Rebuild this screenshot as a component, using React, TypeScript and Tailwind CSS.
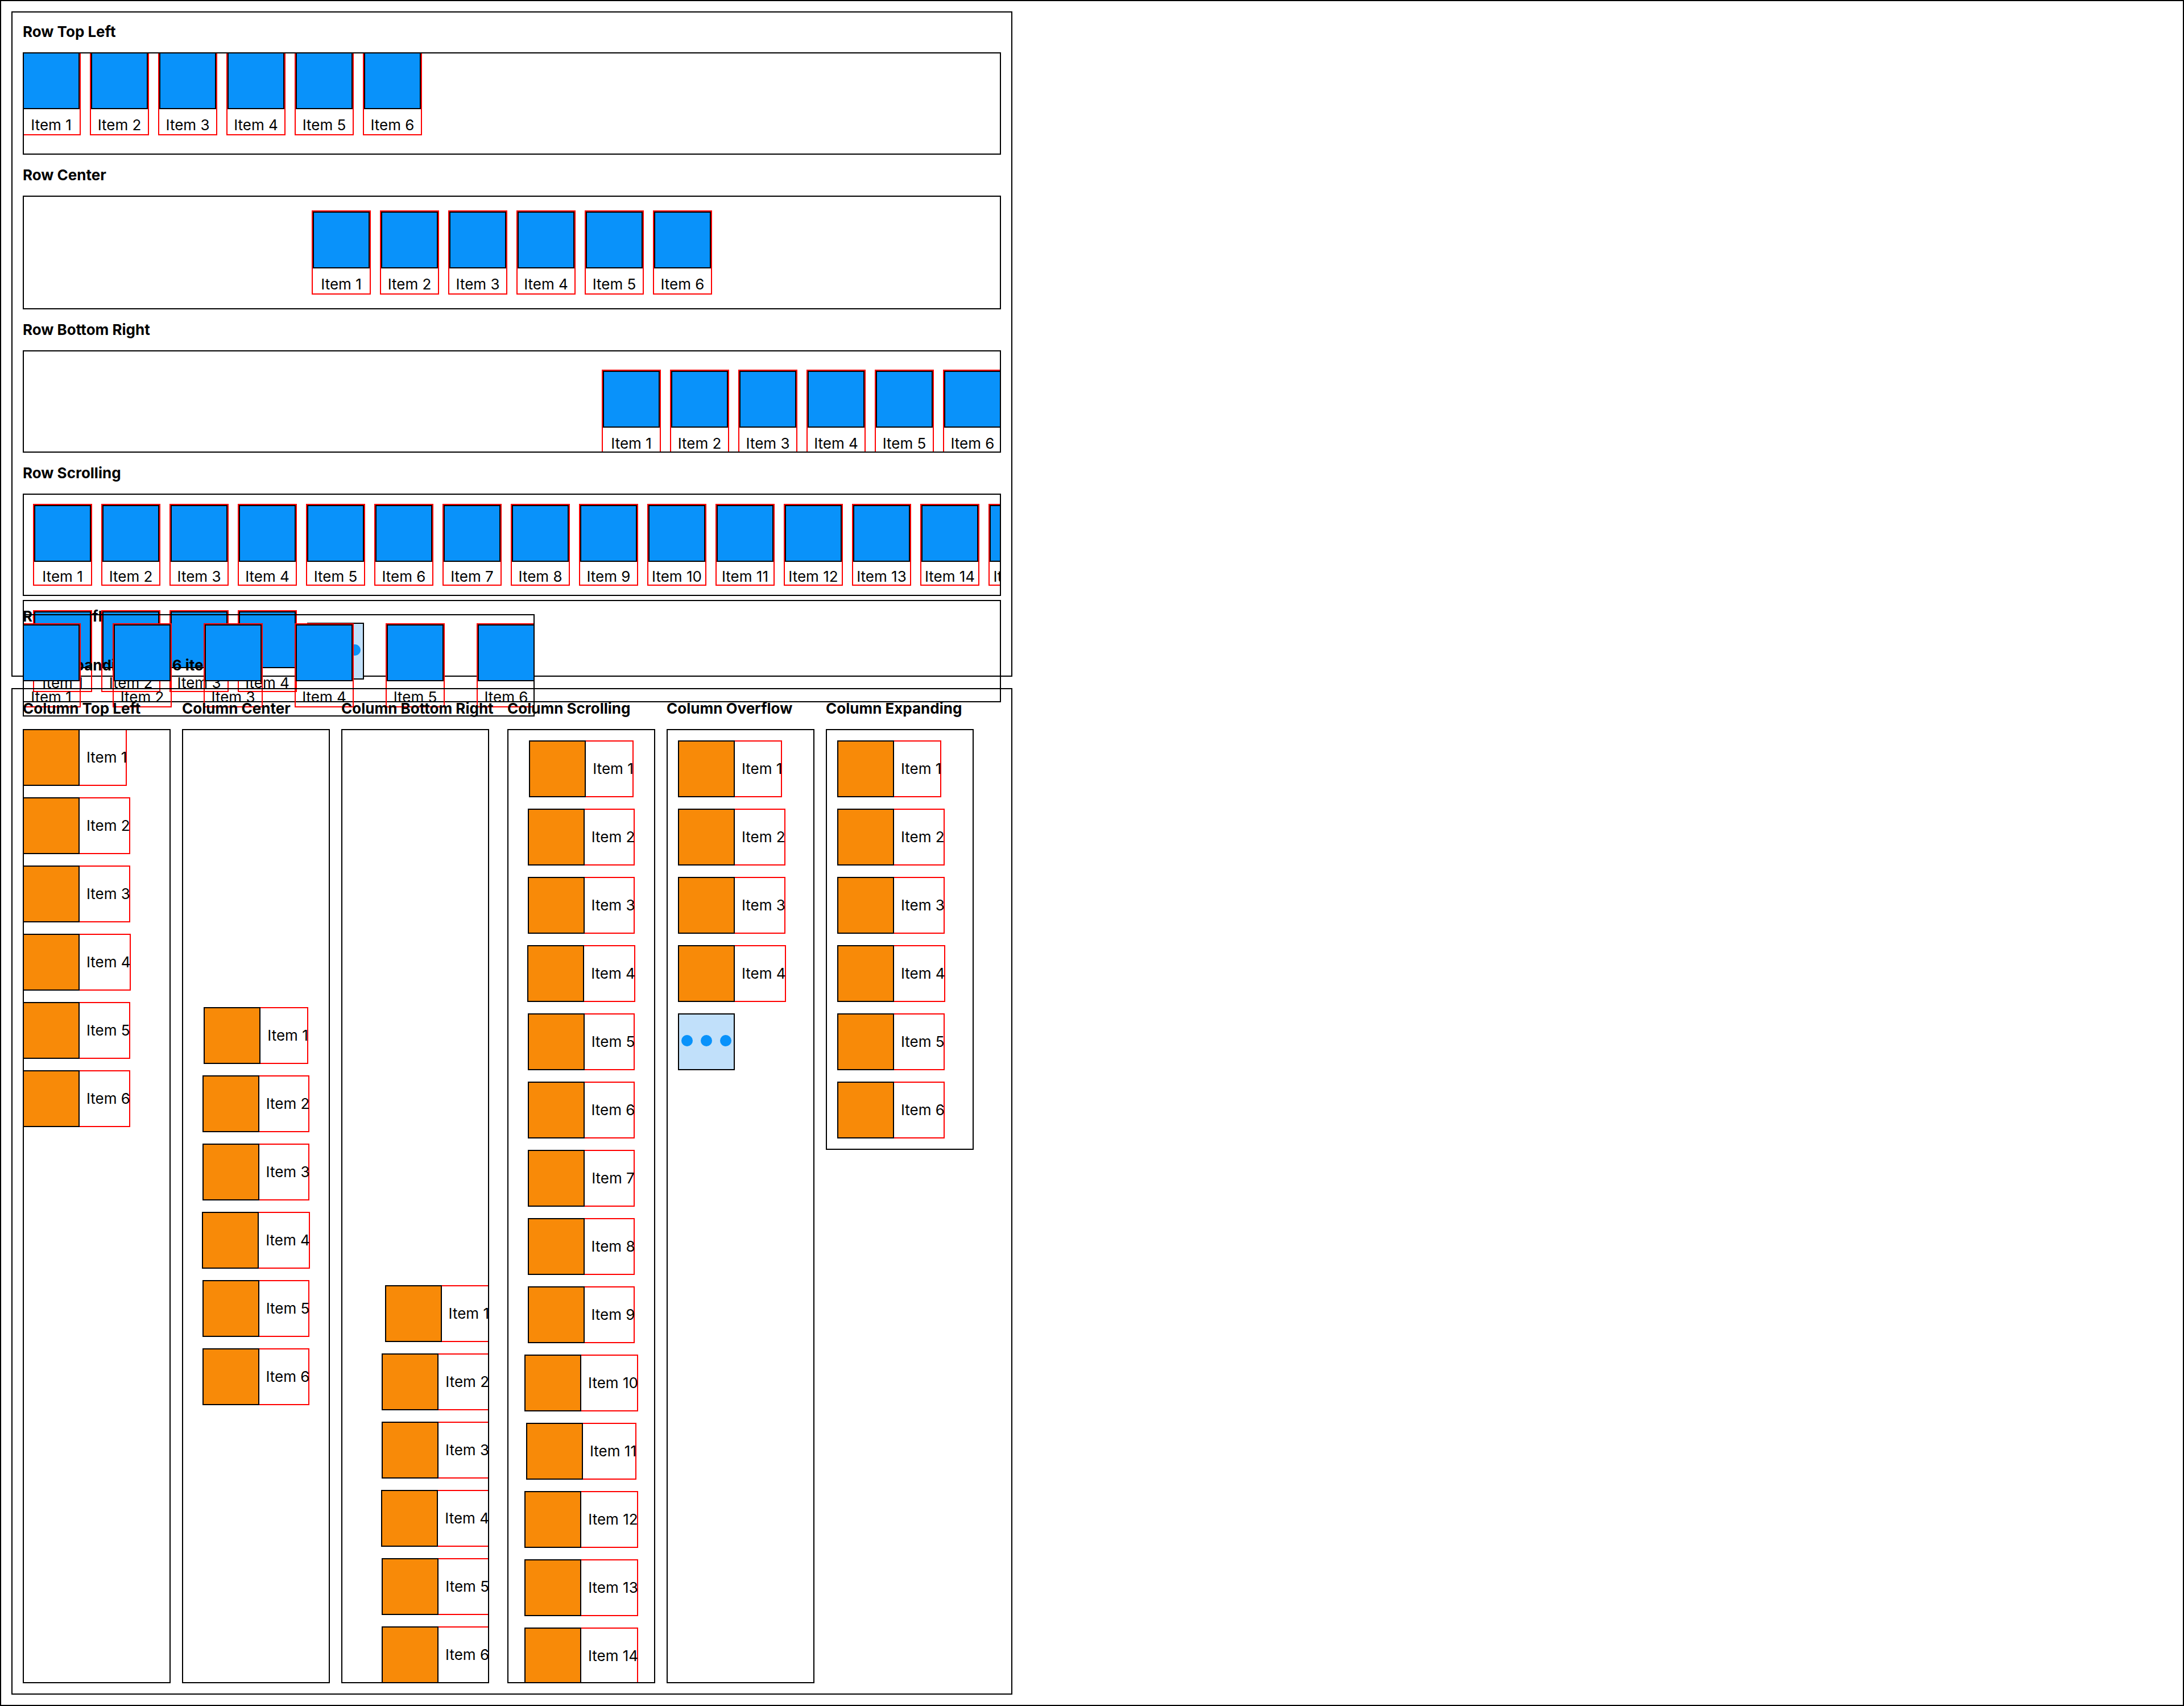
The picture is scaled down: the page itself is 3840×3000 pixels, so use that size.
import type { ReactNode } from "react";

const labels = (count: number) =>
  Array.from({ length: count }, (_, i) => `Item ${i + 1}`);

/* The frame is painted over the content so that clipped items stop at it. */
const FRAME =
  "relative overflow-clip after:pointer-events-none after:absolute after:inset-0 after:border-2 after:border-black after:content-['']";

function Title({ children }: { children: ReactNode }) {
  return (
    <h2 className="relative h-8 text-[26px] leading-8 font-bold whitespace-nowrap">
      {children}
    </h2>
  );
}

function RowItem({ label, compact = false }: { label: string; compact?: boolean }) {
  return (
    <li
      className={`flex w-[100px] shrink-0 flex-col items-center shadow-[0_0_0_2px_#ff0000] ${
        compact ? "h-[140px] gap-[10px]" : "h-36 gap-3"
      }`}
    >
      <div className="size-[100px] shrink-0 border-2 border-black bg-[#0992fa]" />
      <span className="shrink-0 leading-8 whitespace-nowrap">{label}</span>
    </li>
  );
}

function ColumnItem({ label }: { label: string }) {
  return (
    <li className="flex h-[100px] shrink-0 items-center gap-3 shadow-[inset_0_0_0_2px_#ff0000]">
      <div className="size-[100px] shrink-0 border-2 border-black bg-[#f88a08]" />
      <span className="leading-8 whitespace-nowrap">{label}</span>
    </li>
  );
}

function OverflowButton() {
  return (
    <li className="flex shrink-0">
      <button
        type="button"
        aria-label="More items"
        className="flex size-[100px] items-center justify-center gap-[14px] border-2 border-black bg-[#c1e0fa] pb-1"
      >
        <span className="size-5 rounded-full bg-[#0992fa]" />
        <span className="size-5 rounded-full bg-[#0992fa]" />
        <span className="size-5 rounded-full bg-[#0992fa]" />
      </button>
    </li>
  );
}

function Column({
  title,
  list,
  width = "",
  fill = true,
  children,
}: {
  title: string;
  list: string;
  width?: string;
  fill?: boolean;
  children: ReactNode;
}) {
  return (
    <section className={`flex min-h-0 flex-col gap-5 ${width}`}>
      <Title>{title}</Title>
      <ul
        className={`${FRAME} flex w-[260px] flex-col gap-5 ${fill ? "min-h-0 flex-1" : ""} ${list}`}
      >
        {children}
      </ul>
    </section>
  );
}

export default function App() {
  const six = labels(6);
  const four = labels(4);
  const many = labels(15);
  return (
    <main className="flex h-screen flex-col items-start gap-5 border-2 border-black bg-white p-[18px] font-['Inter',sans-serif] text-[26px] text-black">
      <div className="relative flex w-[1760px] max-w-full shrink-0 flex-col gap-5 border-2 border-black p-[18px]">
        <section className="flex flex-col gap-5">
          <Title>Row Top Left</Title>
          <ul className={`${FRAME} flex h-[180px] items-start gap-5`}>
            {six.map((l) => (
              <RowItem key={l} label={l} />
            ))}
          </ul>
        </section>

        <section className="flex flex-col gap-5">
          <Title>Row Center</Title>
          <ul className={`${FRAME} flex h-[200px] items-center justify-center gap-5`}>
            {six.map((l) => (
              <RowItem key={l} label={l} />
            ))}
          </ul>
        </section>

        <section className="flex flex-col gap-5">
          <Title>Row Bottom Right</Title>
          <ul className={`${FRAME} flex h-[180px] items-end justify-end gap-5`}>
            {six.map((l) => (
              <RowItem key={l} label={l} />
            ))}
          </ul>
        </section>

        <section className="flex flex-col gap-5">
          <Title>Row Scrolling</Title>
          <ul className={`${FRAME} flex h-[180px] gap-5 p-5`}>
            {many.map((l) => (
              <RowItem key={l} label={l} compact />
            ))}
          </ul>
        </section>

        {/* The last two rows are shorter than their content, which spills over. */}
        <section className="h-[66px]">
          <Title>Row Overflow</Title>
          <ul className={`${FRAME} -mt-[45px] flex h-[180px] items-center gap-5 p-5`}>
            {four.map((l) => (
              <RowItem key={l} label={l} compact />
            ))}
            <OverflowButton />
          </ul>
        </section>

        <section className="h-4">
          <Title>Row Expanding with 6 items</Title>
          <ul
            className={`${FRAME} -mt-[106px] flex h-[180px] w-[900px] items-center justify-between`}
          >
            {six.map((l) => (
              <RowItem key={l} label={l} />
            ))}
          </ul>
        </section>
      </div>

      <div className="relative flex min-h-0 w-[1760px] max-w-full flex-1 gap-5 border-2 border-black p-[18px]">
        <Column title="Column Top Left" list="items-start">
          {six.map((l) => (
            <ColumnItem key={l} label={l} />
          ))}
        </Column>
        <Column title="Column Center" list="items-center justify-center">
          {six.map((l) => (
            <ColumnItem key={l} label={l} />
          ))}
        </Column>
        <Column title="Column Bottom Right" list="items-end justify-end" width="min-w-[272px]">
          {six.map((l) => (
            <ColumnItem key={l} label={l} />
          ))}
        </Column>
        <Column title="Column Scrolling" list="items-center p-5">
          {many.map((l) => (
            <ColumnItem key={l} label={l} />
          ))}
        </Column>
        <Column title="Column Overflow" list="items-start p-5">
          {four.map((l) => (
            <ColumnItem key={l} label={l} />
          ))}
          <OverflowButton />
        </Column>
        <Column title="Column Expanding" list="items-start p-5" fill={false}>
          {six.map((l) => (
            <ColumnItem key={l} label={l} />
          ))}
        </Column>
      </div>
    </main>
  );
}
